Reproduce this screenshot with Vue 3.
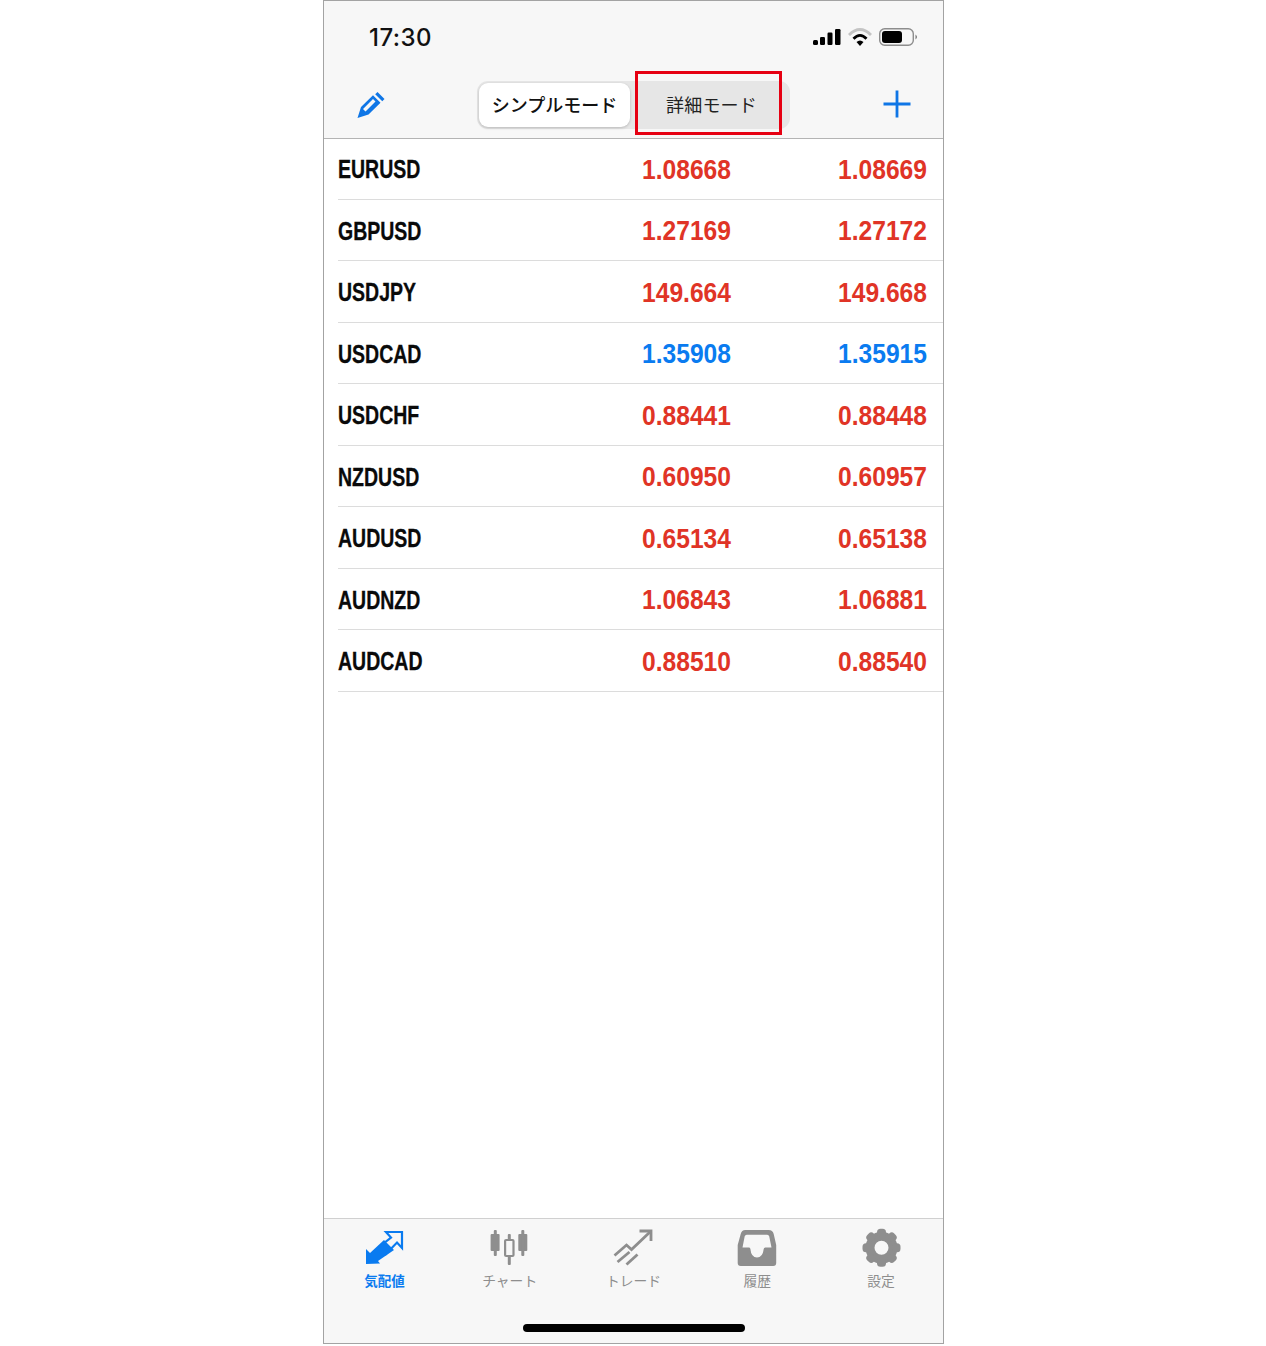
<script setup>
const rows = [
  { s: 'EURUSD', b: '1.08668', a: '1.08669', c: 'down' },
  { s: 'GBPUSD', b: '1.27169', a: '1.27172', c: 'down' },
  { s: 'USDJPY', b: '149.664', a: '149.668', c: 'down' },
  { s: 'USDCAD', b: '1.35908', a: '1.35915', c: 'up' },
  { s: 'USDCHF', b: '0.88441', a: '0.88448', c: 'down' },
  { s: 'NZDUSD', b: '0.60950', a: '0.60957', c: 'down' },
  { s: 'AUDUSD', b: '0.65134', a: '0.65138', c: 'down' },
  { s: 'AUDNZD', b: '1.06843', a: '1.06881', c: 'down' },
  { s: 'AUDCAD', b: '0.88510', a: '0.88540', c: 'down' }
]
const teeth = [0, 45, 90, 135, 180, 225, 270, 315]
</script>

<template>
  <div class="page">
    <div class="phone">
      <header class="head">
        <div class="status">
          <span class="time">17:30</span>
          <svg class="status-icons" width="106" height="20" viewBox="0 0 106 20">
            <g transform="translate(-812 -28)">
              <rect x="813" y="40" width="5" height="5" rx="1.5" />
              <rect x="820" y="37" width="5" height="8" rx="1.2" />
              <rect x="827.5" y="32.5" width="5" height="12.5" rx="1.2" />
              <rect x="835" y="29" width="5.500" height="16" rx="1.2" />
              <path d="M849 35 Q860 24 871 35" fill="none" stroke="#c4c4c4" stroke-width="2.8" />
              <path d="M853.500 38.800 Q860 32 866.500 38.800" fill="none" stroke="#000" stroke-width="2.8" />
              <path d="M856.500 42 Q860 38.800 863.500 42 L860 46 Z" />
              <rect x="879.7" y="28.7" width="33.6" height="16.6" rx="5" fill="none" stroke="#8d8d8d" stroke-width="1.4" />
              <rect x="882" y="31" width="20" height="12" rx="3" />
              <path d="M915.500 34.500 Q918.500 37 915.500 39.500 Z" fill="#777" />
            </g>
          </svg>
        </div>
        <div class="nav">
          <div class="nav-left">
            <svg width="30" height="30" viewBox="0 0 30 30">
              <g transform="translate(-356 -89.500)" fill="#0f76e6">
                <path fill-rule="evenodd" d="M357.500 117.500 L361 106.500 L373 94.800 L380.500 102.300 L368.500 114 Z M363 108.500 L373 98.500 L375.500 101 L365.500 111 Z" />
                <path d="M377.500 91.500 L384.500 98.500 L382.300 100.800 L375.200 93.800 Z" />
              </g>
            </svg>
          </div>
          <div class="segment">
            <div class="seg seg-on">シンプルモード</div>
            <div class="seg seg-off">詳細モード</div>
            <div class="mark"></div>
          </div>
          <div class="nav-right">
            <svg width="30" height="30" viewBox="0 0 30 30">
              <path d="M1.500 14 H28.500 M15 0.500 V27.500" stroke="#0f76e6" stroke-width="2.800" fill="none" />
            </svg>
          </div>
        </div>
      </header>

      <main class="list">
        <div v-for="r in rows" :key="r.s" class="row">
          <span class="sym">{{ r.s }}</span>
          <span class="num" :class="r.c">{{ r.b }}</span>
          <span class="num" :class="r.c">{{ r.a }}</span>
        </div>
      </main>

      <footer class="bar">
        <div class="tabs">
          <div class="tab active">
            <svg width="40" height="40" viewBox="0 0 40 40">
              <g transform="translate(-367 -1229)">
                <path d="M366 1265 L366 1249 L371 1254 L385 1241 L395 1251 L379 1262 L381 1264.500 Z" fill="#0a7bf0" />
                <path d="M380 1248 L392 1238.500 L387 1233 H403 V1249 L398 1243.500 L386 1256" fill="none" stroke="#0a7bf0" stroke-width="2.200" />
              </g>
            </svg>
            <span>気配値</span>
          </div>
          <div class="tab">
            <svg width="40" height="40" viewBox="0 0 40 40">
              <g transform="translate(-489.700 -1228)" fill="#8e8e8e">
                <rect x="490.300" y="1234" width="9" height="17" rx="1" />
                <rect x="493.500" y="1230" width="3" height="26" rx="1" />
                <rect x="518" y="1234" width="9" height="17" rx="1" />
                <rect x="521" y="1230" width="3" height="26" rx="1" />
                <rect x="507.500" y="1234" width="3" height="6" rx="1" />
                <rect x="507.500" y="1255" width="3" height="10" rx="1" />
                <rect x="504.800" y="1240" width="8.400" height="16" rx="1" fill="none" stroke="#8e8e8e" stroke-width="2.200" />
              </g>
            </svg>
            <span>チャート</span>
          </div>
          <div class="tab">
            <svg width="40" height="40" viewBox="0 0 40 40">
              <g transform="translate(-613.500 -1228)" fill="none" stroke="#8e8e8e" stroke-width="2.800">
                <path d="M615 1255.500 L627 1245 L632 1249.500 L650.500 1232" />
                <path d="M640 1231 H651.500 V1241" />
                <path d="M618 1262 L630 1252" />
                <path d="M627 1264.500 L638 1254.500" />
              </g>
            </svg>
            <span>トレード</span>
          </div>
          <div class="tab">
            <svg width="40" height="40" viewBox="0 0 40 40">
              <g transform="translate(-737.300 -1228)">
                <path fill-rule="evenodd" fill="#8e8e8e" d="M745.500 1230 H769 Q773 1230 774 1234 L776.500 1245 V1263 Q776.500 1266 773.500 1266 H741 Q738 1266 738 1263 V1245 L741 1234 Q742 1230 745.500 1230 Z M747 1234.800 Q745.500 1234.800 745 1236.300 L742.800 1247.500 H749.500 Q750.500 1247.500 750.700 1249 Q751.500 1257.500 757.300 1257.500 Q763 1257.500 764 1249 Q764.200 1247.500 765.500 1247.500 H771.800 L769.500 1236.300 Q769 1234.800 767.500 1234.800 Z" />
              </g>
            </svg>
            <span>履歴</span>
          </div>
          <div class="tab">
            <svg width="40" height="40" viewBox="0 0 40 40">
              <g transform="translate(20.500 19.700)" fill="#8e8e8e">
                <circle r="11.500" fill="none" stroke="#8e8e8e" stroke-width="9" />
                <rect v-for="t in teeth" :key="t" x="-4.500" y="-19" width="9" height="8" rx="3.500" :transform="`rotate(${t})`" />
              </g>
            </svg>
            <span>設定</span>
          </div>
        </div>
        <div class="home"></div>
      </footer>
    </div>
  </div>
</template>

<style>
html, body { margin: 0; background: #fff; }
</style>

<style scoped>
.page {
  background: #fff;
  padding-left: 323px;
  height: 1346px;
  font-family: "Noto Sans CJK JP", "Liberation Sans", sans-serif;
}
.phone {
  width: 621px;
  height: 1344px;
  box-sizing: border-box;
  border: 1px solid #a3a3a3;
  display: flex;
  flex-direction: column;
  background: #fff;
}
.head {
  background: #f7f7f7;
  border-bottom: 1px solid #b4b4b4;
  height: 138px;
  box-sizing: border-box;
  flex: none;
}
.status {
  height: 70px;
  box-sizing: border-box;
  display: flex;
  justify-content: space-between;
  align-items: flex-start;
  padding: 27px 25px 0 45px;
}
.time {
  font-family: Inter, "Liberation Sans", sans-serif;
  font-size: 24px;
  font-weight: 500;
  line-height: 20px;
  letter-spacing: 0.45px;
  color: #111;
}
.nav {
  height: 67px;
  display: grid;
  grid-template-columns: 1fr auto 1fr;
  align-items: center;
}
.nav-left { padding-left: 32px; display: flex; }
.nav-right { display: flex; justify-content: flex-end; padding-right: 31px; }
.segment {
  position: relative;
  display: flex;
  width: 313px;
  height: 48px;
  box-sizing: border-box;
  padding: 2px;
  background: #e6e6e6;
  border-radius: 11px;
}
.seg {
  height: 44px;
  padding-bottom: 2px;
  box-sizing: border-box;
  display: flex;
  align-items: center;
  justify-content: center;
  font-size: 18px;
  color: #111;
}
.seg-on {
  width: 151px;
  background: #fff;
  border-radius: 9px;
  font-weight: 500;
  box-shadow: 0 1px 3px rgba(0, 0, 0, 0.2);
}
.seg-off {
  width: 158px;
  padding-left: 5px;
  letter-spacing: 0.2px;
  color: #222;
}
.mark {
  position: absolute;
  left: 158px;
  top: -10px;
  width: 147px;
  height: 64px;
  box-sizing: border-box;
  border: 3px solid #e60012;
}
.list { flex: 1; margin-top: -1px; }
.row {
  margin-left: 14px;
  height: 61.5px;
  box-sizing: border-box;
  padding-top: 3px;
  border-bottom: 1px solid #dcdcdc;
  display: grid;
  grid-template-columns: 304px 196px 1fr;
  align-items: center;
  font-family: "Liberation Sans", Arial, sans-serif;
  font-weight: 700;
}
.sym {
  display: inline-block;
  color: #0a0a0a;
  font-size: 25px;
  -webkit-text-stroke: 0.3px #0a0a0a;
  transform: scaleX(0.78);
  transform-origin: left center;
}
.num {
  display: inline-block;
  font-size: 27.5px;
  transform: scaleX(0.895);
  transform-origin: left center;
}
.down { color: #e03426; }
.up { color: #0a7bf0; }
.bar {
  flex: none;
  height: 125px;
  box-sizing: border-box;
  background: #f7f7f7;
  border-top: 1px solid #d0d0d0;
  display: flex;
  flex-direction: column;
  align-items: center;
}
.tabs {
  display: grid;
  grid-template-columns: repeat(5, 1fr);
  width: 100%;
  padding-top: 9px;
}
.tab {
  display: flex;
  flex-direction: column;
  align-items: center;
  color: #8e8e8e;
  font-size: 13.8px;
  line-height: 16px;
}
.tab svg { display: block; }
.tab span { margin-top: 4px; }
.tab.active { color: #0a7bf0; font-weight: 700; font-size: 13.5px; }
.tab.active span { margin-right: 3px; }
.home {
  width: 222px;
  height: 8px;
  border-radius: 4px;
  background: #000;
  margin-top: 36px;
}
</style>
